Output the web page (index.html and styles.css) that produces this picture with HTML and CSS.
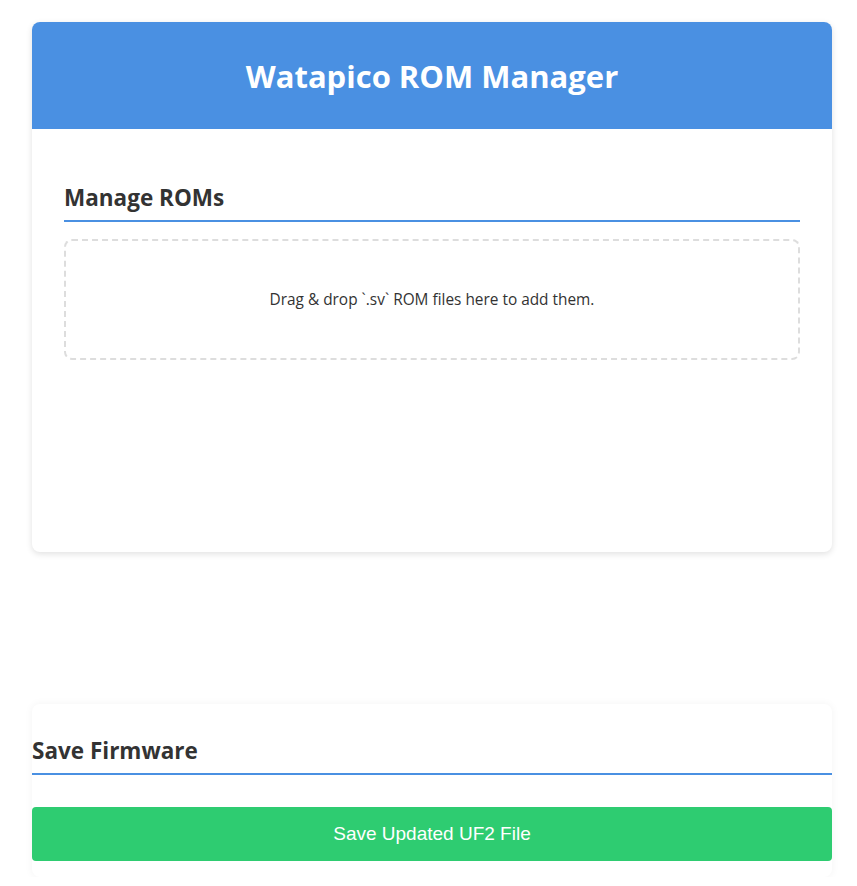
FILE: index.html
```html
<!DOCTYPE html>
<html lang="en">

<head>
    <meta charset="UTF-8">
    <title>Watapico ROM Manager</title>
    <link rel="stylesheet" href="styles.css">
</head>

<body>

    <div class="container">
        <header class="app-header">
            <h1>Watapico ROM Manager</h1>
        </header>

        <div class="app-body">
            <h2 class="section-title">Manage ROMs</h2>
            <div class="drop-zone" id="drop-zone">
                <p>Drag &amp; drop `.sv` ROM files here to add them.</p>
            </div>
            <div class="rom-list" id="rom-list"></div>
        </div>
    </div>

    <div class="save-section">
        <h2 class="section-title">Save Firmware</h2>
        <button class="save-btn" id="save-btn">Save Updated UF2 File</button>
    </div>

</body>

</html>
```

FILE: styles.css
```css
body {
    margin: 0;
    padding: 22px 25px 0 32px;
    font-family: "Open Sans", "Noto Sans", sans-serif;
    background: #fff;
    color: #333;
}

.container {
    width: 800px;
    background: #fff;
    border-radius: 8px;
    box-shadow: 0 2px 6px rgba(0, 0, 0, 0.12);
    overflow: hidden;
}

.app-header {
    background: #4a90e2;
    height: 107px;
    display: flex;
    align-items: center;
    justify-content: center;
}

.app-header h1 {
    margin: 0;
    color: #fff;
    font-size: 31px;
    font-weight: 700;
}

.app-body {
    padding: 53px 32px 32px;
}

.section-title {
    margin: 0;
    font-size: 22.5px;
    font-weight: 700;
    color: #333;
    padding-bottom: 7px;
    border-bottom: 2px solid #4a90e2;
}

.drop-zone {
    margin-top: 17px;
    height: 117px;
    border: 2px dashed #ddd;
    border-radius: 8px;
    display: flex;
    align-items: center;
    justify-content: center;
}

.drop-zone p {
    margin: 0;
    font-size: 15.4px;
    color: #333;
}

.rom-list {
    min-height: 160px;
}

.save-section {
    width: 800px;
    margin-top: 152px;
    padding: 31px 0 16px;
    background: #fff;
    border-radius: 8px;
    box-shadow: 0 0 8px rgba(0, 0, 0, 0.05);
}

.save-btn {
    display: block;
    width: 100%;
    margin-top: 32px;
    height: 54px;
    border: none;
    border-radius: 4px;
    background: #2ecc71;
    color: #fff;
    font-family: "Liberation Sans", Arial, sans-serif;
    font-size: 19px;
    cursor: pointer;
}
```
